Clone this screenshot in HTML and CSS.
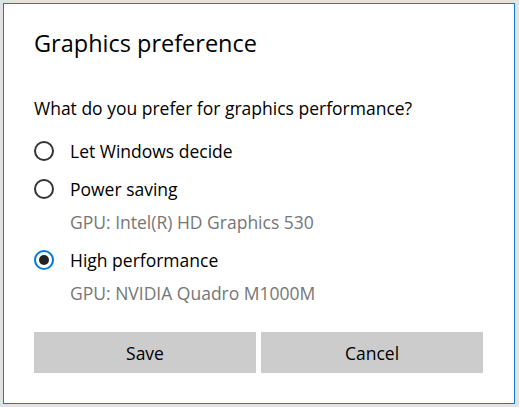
FILE: index.html
```html
<!DOCTYPE html>
<html lang="en">
<head>
  <meta charset="UTF-8">
  <meta name="viewport" content="width=device-width, initial-scale=1">
  <title>Graphics preference</title>
  <link rel="stylesheet" href="styles.css">
</head>
<body>
  <div class="dialog">
    <h1 class="title">Graphics preference</h1>
    <p class="question">What do you prefer for graphics performance?</p>

    <div class="options">
      <label class="option">
        <span class="row"><span class="radio"></span>Let Windows decide</span>
      </label>
      <label class="option">
        <span class="row"><span class="radio"></span>Power saving</span>
        <span class="sub">GPU: Intel(R) HD Graphics 530</span>
      </label>
      <label class="option">
        <span class="row"><span class="radio checked"></span>High performance</span>
        <span class="sub">GPU: NVIDIA Quadro M1000M</span>
      </label>
    </div>

    <div class="buttons">
      <button class="btn">Save</button>
      <button class="btn">Cancel</button>
    </div>
  </div>
</body>
</html>
```
FILE: styles.css
```css
html, body {
  margin: 0;
  height: 100%;
}
body {
  background: #e2e2e2;
  padding: 3px 4px 3px 3px;
  box-sizing: border-box;
  font-family: "Segoe UI", "Open Sans", sans-serif;
  color: #000;
}
.dialog {
  height: 401px;
  box-sizing: border-box;
  background: #fff;
  border: 1px solid #1979ca;
  padding: 24px 30px 0 30px;
}
.title {
  margin: 0;
  font-size: 23.5px;
  line-height: 30px;
  font-weight: normal;
}
.question {
  margin: 39px 0 0;
  font-size: 17.5px;
  line-height: 22px;
}
.options {
  margin-top: 21px;
  display: flex;
  flex-direction: column;
  gap: 16px;
}
.option {
  display: flex;
  flex-direction: column;
  font-size: 17.5px;
  line-height: 22px;
}
.row {
  display: flex;
  align-items: center;
  gap: 16px;
}
.radio {
  width: 20px;
  height: 20px;
  box-sizing: border-box;
  border: 2px solid #333;
  border-radius: 50%;
  display: flex;
  align-items: center;
  justify-content: center;
}
.radio.checked {
  border-color: #0078d7;
}
.radio.checked::after {
  content: "";
  width: 10px;
  height: 10px;
  border-radius: 50%;
  background: #222;
}
.sub {
  margin: 11px 0 0 36px;
  color: #767676;
}
.buttons {
  margin-top: 28px;
  display: flex;
  gap: 5px;
  padding-right: 1px;
}
.btn {
  flex: 1;
  height: 41px;
  border: none;
  background: #cccccc;
  font-family: inherit;
  font-size: 17.5px;
  color: #000;
  padding: 0;
}
```
